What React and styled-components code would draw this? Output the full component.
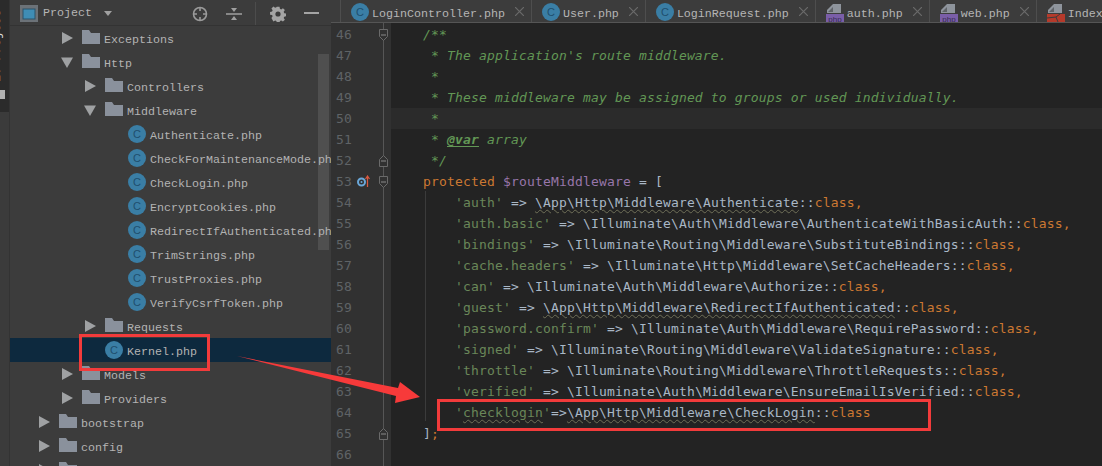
import React from 'react';
import styled, { createGlobalStyle } from 'styled-components';

const Global = createGlobalStyle`
  html, body {
    margin: 0;
    padding: 0;
    background: #232323;
    overflow: hidden;
  }
`;

const Screen = styled.div`
  position: relative;
  display: flex;
  width: 1102px;
  height: 466px;
  overflow: hidden;
`;

const SideStrip = styled.div`
  width: 9px;
  flex: none;
  background: #3b3b3b;
  border-right: 1px solid #333;
`;

const StripButton = styled.div`
  height: 112px;
  background: #2b2b2b;
  overflow: hidden;
  position: relative;
`;

const StripLabel = styled.div`
  writing-mode: vertical-rl;
  transform: rotate(180deg);
  width: 14px;
  height: 72px;
  margin: 10px 0 0 -10px;
  font: 12px 'Liberation Mono', monospace;
  white-space: nowrap;
  color: #d8d8d8;
`;

const StripSquare = styled.div`
  position: absolute;
  left: 0;
  top: 90px;
  width: 5px;
  height: 9px;
  background: #b0b0b0;
`;

const ProjectPanel = styled.div`
  position: relative;
  width: 321px;
  flex: none;
  background: #3c3c3c;
  overflow: hidden;
`;

const PanelHeader = styled.div`
  display: flex;
  align-items: center;
  box-sizing: border-box;
  height: 26px;
  padding: 2px 0 0 10px;
  border-bottom: 1px solid #333;
  font: 11.67px 'Liberation Mono', monospace;
  color: #b5b5b5;
`;

const HeaderTitle = styled.span`
  margin-left: 5px;
  margin-top: -1px;
`;

const HeaderTool = styled.span`
  display: flex;
  margin-left: ${p => p.$gap}px;
`;

const HeaderDivider = styled.span`
  width: 1px;
  height: 23px;
  margin-left: 13px;
  background: #4c4c4c;
`;

const Tree = styled.div`
  position: relative;
`;

const Row = styled.div`
  display: flex;
  align-items: center;
  height: 24px;
  padding-left: ${p => p.$indent}px;
  background: ${p => (p.$selected ? '#0d293e' : 'transparent')};
  font: 11.67px 'Liberation Mono', monospace;
  color: #b3b3b3;
  white-space: nowrap;
`;

const RowArrow = styled.span`
  display: flex;
  width: 21px;
  flex: none;
`;

const RowLabel = styled.span`
  margin: 4px 0 0 4px;
`;

const FileBadge = styled.span`
  display: inline-flex;
  align-items: center;
  justify-content: center;
  flex: none;
  width: 18px;
  height: 18px;
  border-radius: 50%;
  background: #3a7ea5;
  color: #1f4f6e;
  font: 11px 'Liberation Sans', sans-serif;
`;

const TreeScrollbar = styled.div`
  position: absolute;
  right: 2px;
  top: 54px;
  width: 11px;
  height: 196px;
  background: #4f4f4f;
`;

const Workspace = styled.div`
  flex: 1;
  display: flex;
  flex-direction: column;
  min-width: 0;
`;

const TabBar = styled.div`
  display: flex;
  height: 22px;
  padding-left: 10px;
  background: #3c3c3c;
  border-bottom: 1px solid #555;
  overflow: hidden;
`;

const Tab = styled.div`
  display: flex;
  align-items: center;
  flex: none;
  box-sizing: border-box;
  height: 22px;
  padding: 2px 8px 0 10px;
  border-left: 1px solid #4e4e4e;
  margin-left: -1px;
  font: 11.67px 'Liberation Mono', monospace;
  color: #b5b5b5;
  white-space: nowrap;
`;

const TabName = styled.span`
  margin: 4px 10px 0 3px;
`;

const Editor = styled.div`
  flex: 1;
  display: flex;
  background: #232323;
`;

const Gutter = styled.div`
  width: 60px;
  flex: none;
  padding-top: 1px;
  background: linear-gradient(#565656, #565656) 52px 0 / 1px 100% no-repeat, #313131;
`;

const GutterRow = styled.div`
  display: flex;
  align-items: center;
  height: 21px;
  padding-left: 5px;
  font: 13px 'DejaVu Sans Mono', monospace;
  letter-spacing: 0.17px;
  color: #5f6366;
`;

const LineNumber = styled.span`
  width: 21px;
  flex: none;
`;

const MarkSlot = styled.span`
  display: flex;
  width: 26px;
  flex: none;
`;

const FoldSlot = styled.span`
  display: flex;
  width: 8px;
  flex: none;
`;

const Code = styled.div`
  position: relative;
  flex: 1;
  padding-top: 1px;
  overflow: hidden;
`;

const IndentGuide = styled.div`
  position: absolute;
  left: 34px;
  top: 168px;
  width: 1px;
  height: 230px;
  background: #3b3b3b;
`;

const Line = styled.div`
  position: relative;
  height: 21px;
  white-space: pre;
  background: ${p => (p.$active ? '#2b2b2b' : 'transparent')};
  font: 13px / 21px 'DejaVu Sans Mono', monospace;
  letter-spacing: 0.17px;
  color: #a9b7c6;
`;

const tokenColors = {
  comment: '#629755',
  string: '#6a8759',
  keyword: '#cc7832',
  variable: '#9876aa',
  plain: '#a9b7c6',
};

const Tok = styled.span`
  color: ${p => tokenColors[p.$kind]};
  font-style: ${p => (p.$italic ? 'italic' : 'normal')};
  font-weight: ${p => (p.$bold ? 'bold' : 'normal')};
  text-decoration: ${p =>
    p.$wavy ? 'underline wavy #6f6f58 1px' : p.$under ? 'underline' : 'none'};
  text-underline-offset: 2px;
`;

const RedBox = styled.div`
  position: absolute;
  left: ${p => p.$x}px;
  top: ${p => p.$y}px;
  width: ${p => p.$w}px;
  height: ${p => p.$h}px;
  border: 3px solid #f23b3b;
  box-sizing: border-box;
`;

const ArrowLayer = styled.svg`
  position: absolute;
  left: 0;
  top: 0;
  pointer-events: none;
`;

const Triangle = ({ open }) => (
  <svg width="12" height="12" viewBox="0 0 12 12">
    {open ? <path d="M0 1.5h12L6 12z" fill="#9fa1a3" /> : <path d="M1 0l11 6-11 6z" fill="#9fa1a3" />}
  </svg>
);

const Folder = () => (
  <svg width="18" height="14" viewBox="0 0 18 14" style={{ flex: 'none', marginTop: -2 }}>
    <path d="M0 0h7l2 3h9v11H0z" fill="#8a919c" />
  </svg>
);

const PhpIcon = ({ red }) => (
  <svg width="18" height="20" viewBox="0 0 18 20" style={{ flex: 'none' }}>
    <path d="M1 11V8l6-6h8v9z" fill="#8e949c" />
    <path d="M2 10l5-5v5z" fill="#5f6368" />
    <rect x="0" y="12" width="18" height="8" fill={red ? '#b53a2b' : '#7a5ea8'} />
    {red ? (
      <path d="M0 16l9-1 4-3M9 15l2 5" stroke="#3c3c3c" strokeWidth="1" fill="none" />
    ) : (
      <text x="9" y="19.5" textAnchor="middle" fontSize="8" fontFamily="Liberation Sans, sans-serif" fill="#352a50">php</text>
    )}
  </svg>
);

const CloseX = () => (
  <svg width="9" height="9" viewBox="0 0 9 9" style={{ flex: 'none', marginTop: -2 }}>
    <path d="M0 0l9 9M9 0L0 9" stroke="#6a6a6a" strokeWidth="1.2" />
  </svg>
);

const FoldMark = ({ end }) => (
  <svg width="9" height="12" viewBox="0 0 9 12" style={{ flex: 'none', marginLeft: -4 }}>
    {end ? (
      <path d="M.5 11.5v-7l4-4 4 4v7z" fill="#313131" stroke="#6a6a6a" />
    ) : (
      <path d="M.5.5h8v7l-4 4-4-4z" fill="#313131" stroke="#6a6a6a" />
    )}
    <path d="M2 6h5" stroke="#8a8a8a" />
  </svg>
);

const OverrideMark = () => (
  <svg width="14" height="13" viewBox="0 0 14 13">
    <circle cx="4.5" cy="7" r="3.5" fill="none" stroke="#6aa7d8" strokeWidth="2" />
    <circle cx="4.5" cy="7" r="1" fill="#6aa7d8" />
    <path d="M10.5 12V2M8.5 4l2-3 2 3" fill="none" stroke="#d9583f" strokeWidth="1.2" />
  </svg>
);

const rows = [
  { name: 'Exceptions', indent: 51 },
  { name: 'Http', indent: 51, open: true },
  { name: 'Controllers', indent: 74 },
  { name: 'Middleware', indent: 74, open: true },
  { name: 'Authenticate.php', indent: 118, file: true },
  { name: 'CheckForMaintenanceMode.php', indent: 118, file: true },
  { name: 'CheckLogin.php', indent: 118, file: true },
  { name: 'EncryptCookies.php', indent: 118, file: true },
  { name: 'RedirectIfAuthenticated.php', indent: 118, file: true },
  { name: 'TrimStrings.php', indent: 118, file: true },
  { name: 'TrustProxies.php', indent: 118, file: true },
  { name: 'VerifyCsrfToken.php', indent: 118, file: true },
  { name: 'Requests', indent: 74 },
  { name: 'Kernel.php', indent: 95, file: true, selected: true },
  { name: 'Models', indent: 51 },
  { name: 'Providers', indent: 51 },
  { name: 'bootstrap', indent: 28 },
  { name: 'config', indent: 28 },
  { name: 'database', indent: 28 },
];

const tabs = [
  { name: 'LoginController.php', icon: 'class' },
  { name: 'User.php', icon: 'class' },
  { name: 'LoginRequest.php', icon: 'class' },
  { name: 'auth.php', icon: 'php' },
  { name: 'web.php', icon: 'php' },
  { name: 'Index.blade.php', icon: 'blade' },
];

// one middleware line: key, class path, wavy or not
const entry = (key, path, wavy) => [
  ['plain', '        '],
  ['string', `'${key}'`],
  ['plain', ' => '],
  ['plain', path, { wavy }],
  ['plain', '::'],
  ['keyword', 'class,'],
];

const lines = [
  [['comment', '    /**', { italic: true }]],
  [['comment', "     * The application's route middleware.", { italic: true }]],
  [['comment', '     *', { italic: true }]],
  [['comment', '     * These middleware may be assigned to groups or used individually.', { italic: true }]],
  [['comment', '     *', { italic: true }]],
  [
    ['comment', '     * ', { italic: true }],
    ['comment', '@var', { italic: true, bold: true, under: true }],
    ['comment', ' array', { italic: true }],
  ],
  [['comment', '     */', { italic: true }]],
  [
    ['keyword', '    protected '],
    ['variable', '$routeMiddleware'],
    ['plain', ' = ['],
  ],
  entry('auth', '\\App\\Http\\Middleware\\Authenticate', true),
  entry('auth.basic', '\\Illuminate\\Auth\\Middleware\\AuthenticateWithBasicAuth'),
  entry('bindings', '\\Illuminate\\Routing\\Middleware\\SubstituteBindings'),
  entry('cache.headers', '\\Illuminate\\Http\\Middleware\\SetCacheHeaders'),
  entry('can', '\\Illuminate\\Auth\\Middleware\\Authorize'),
  entry('guest', '\\App\\Http\\Middleware\\RedirectIfAuthenticated', true),
  entry('password.confirm', '\\Illuminate\\Auth\\Middleware\\RequirePassword'),
  entry('signed', '\\Illuminate\\Routing\\Middleware\\ValidateSignature'),
  entry('throttle', '\\Illuminate\\Routing\\Middleware\\ThrottleRequests'),
  entry('verified', '\\Illuminate\\Auth\\Middleware\\EnsureEmailIsVerified'),
  [
    ['plain', '        '],
    ['string', "'"],
    ['string', 'checklogin', { wavy: true }],
    ['string', "'"],
    ['plain', '=>'],
    ['plain', '\\App\\Http\\Middleware\\CheckLogin', { wavy: true }],
    ['plain', '::'],
    ['keyword', 'class'],
  ],
  [
    ['plain', '    ]'],
    ['keyword', ';'],
  ],
  [],
];

const TabIcon = ({ icon }) => {
  if (icon === 'class') return <FileBadge>C</FileBadge>;
  return <PhpIcon red={icon === 'blade'} />;
};

export default function App() {
  return (
    <Screen>
      <Global />
      <SideStrip>
        <StripButton>
          <StripLabel>1: Project</StripLabel>
          <StripSquare />
        </StripButton>
      </SideStrip>

      <ProjectPanel>
        <TreeScrollbar />
        <PanelHeader>
          <svg width="18" height="18" viewBox="0 0 18 18">
            <rect width="18" height="17" fill="#6c7278" />
            <rect x="3" y="4" width="12" height="10" fill="#3f8db5" stroke="#2d5268" />
          </svg>
          <HeaderTitle>Project</HeaderTitle>
          <HeaderTool $gap={12}>
            <svg width="8" height="5" viewBox="0 0 8 5"><path d="M0 0h8L4 5z" fill="#a0a0a0" /></svg>
          </HeaderTool>
          <HeaderTool $gap={80}>
            <svg width="16" height="16" viewBox="0 0 16 16" fill="none" stroke="#9a9a9a" strokeWidth="1.6">
              <circle cx="8" cy="8" r="6.5" />
              <path d="M8 1v4M8 11v4M1 8h4M11 8h4" />
            </svg>
          </HeaderTool>
          <HeaderTool $gap={18}>
            <svg width="16" height="16" viewBox="0 0 16 16">
              <path d="M0 8h16" stroke="#a0a0a0" strokeWidth="1.5" />
              <path d="M5 2h6L8 6zM5 14h6L8 10z" fill="#a0a0a0" />
            </svg>
          </HeaderTool>
          <HeaderDivider />
          <HeaderTool $gap={14}>
            <svg width="16" height="16" viewBox="0 0 16 16">
              <path
                d="M6.5 0h3l.4 2.2 1.4.6L13.2 1.5l2.1 2.1-1.3 1.9.6 1.4 2.2.4v3l-2.2.4-.6 1.4 1.3 1.9-2.1 2.1-1.9-1.3-1.4.6-.4 2.2h-3l-.4-2.2-1.4-.6-1.9 1.3L.7 12.3 2 10.4l-.6-1.4L-.8 8.6v-3l2.2-.4.6-1.4L.7 1.9 2.8-.2l1.9 1.3 1.4-.6z"
                fill="#a4a4a4"
                transform="translate(.8 .8) scale(.92)"
              />
              <circle cx="8" cy="8" r="2.6" fill="#3c3c3c" />
            </svg>
          </HeaderTool>
          <HeaderTool $gap={18}>
            <svg width="15" height="3" viewBox="0 0 15 3"><rect width="15" height="2" fill="#a4a4a4" /></svg>
          </HeaderTool>
        </PanelHeader>

        <Tree>
          {rows.map(row => (
            <Row key={row.name} $indent={row.indent} $selected={row.selected}>
              {row.file ? (
                <FileBadge>C</FileBadge>
              ) : (
                <>
                  <RowArrow>
                    <Triangle open={row.open} />
                  </RowArrow>
                  <Folder />
                </>
              )}
              <RowLabel>{row.name}</RowLabel>
            </Row>
          ))}
        </Tree>
      </ProjectPanel>

      <Workspace>
        <TabBar>
          {tabs.map(tab => (
            <Tab key={tab.name}>
              <TabIcon icon={tab.icon} />
              <TabName>{tab.name}</TabName>
              <CloseX />
            </Tab>
          ))}
        </TabBar>
        <Editor>
          <Gutter>
            {lines.map((_, i) => {
              const num = 46 + i;
              return (
                <GutterRow key={num}>
                  <LineNumber>{num}</LineNumber>
                  <MarkSlot>{num === 53 && <OverrideMark />}</MarkSlot>
                  <FoldSlot>
                    {(num === 46 || num === 53) && <FoldMark />}
                    {(num === 52 || num === 65) && <FoldMark end />}
                  </FoldSlot>
                </GutterRow>
              );
            })}
          </Gutter>
          <Code>
            <IndentGuide />
            {lines.map((tokens, i) => (
              <Line key={i} $active={i === 4}>
                {tokens.map(([kind, text, opts = {}], j) => (
                  <Tok
                    key={j}
                    $kind={kind}
                    $italic={opts.italic}
                    $bold={opts.bold}
                    $under={opts.under}
                    $wavy={opts.wavy}
                  >
                    {text}
                  </Tok>
                ))}
              </Line>
            ))}
          </Code>
        </Editor>
      </Workspace>

      <RedBox $x={79} $y={334} $w={131} $h={37} />
      <RedBox $x={437} $y={399} $w={494} $h={32} />
      <ArrowLayer width="1102" height="466" viewBox="0 0 1102 466">
        <path d="M237 356L398 388 400 382 420 397 395 403 396 396z" fill="#f73a3a" />
      </ArrowLayer>
    </Screen>
  );
}
